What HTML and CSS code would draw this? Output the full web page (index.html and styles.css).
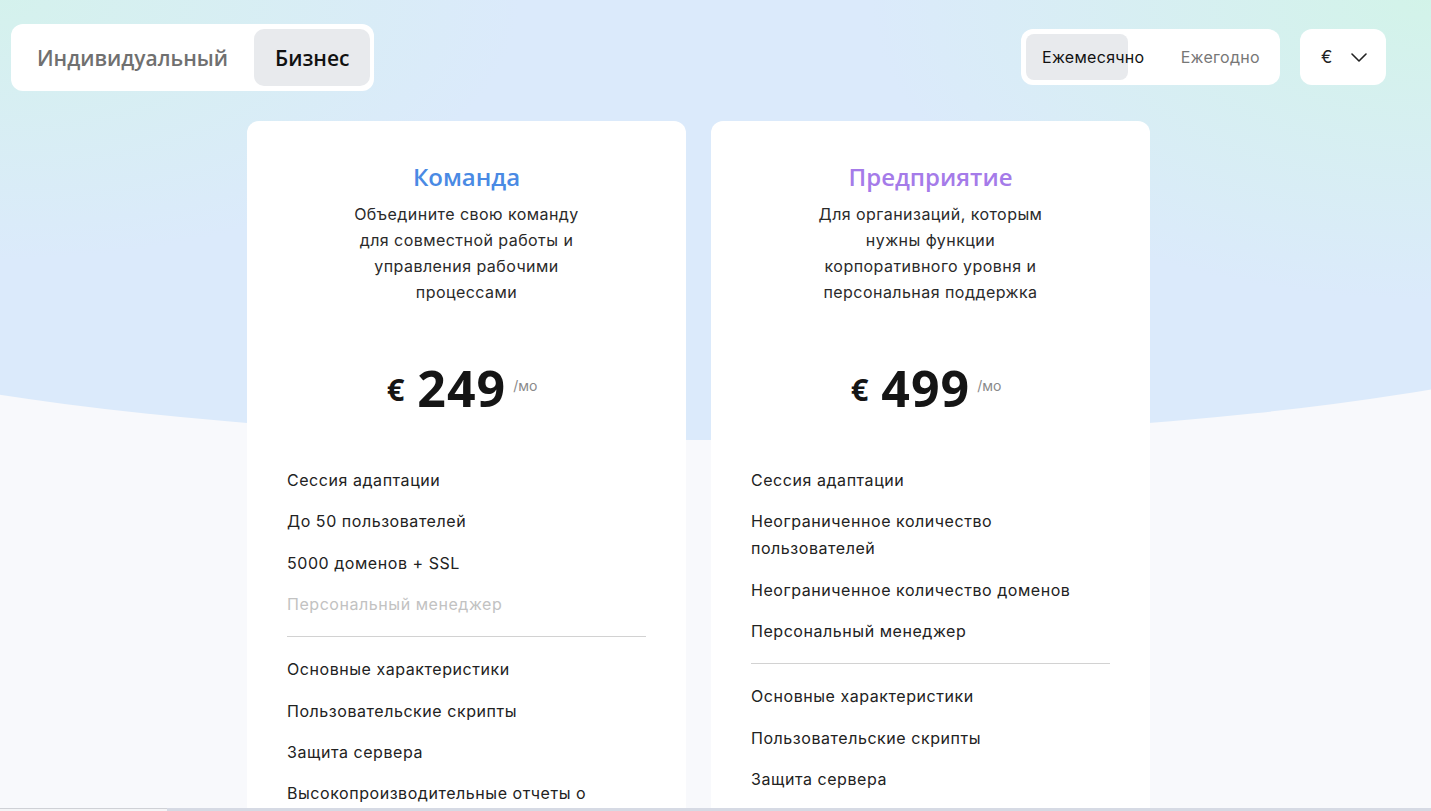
FILE: index.html
```html
<!DOCTYPE html>
<html lang="ru">
<head>
<meta charset="utf-8">
<title>Тарифы</title>
<link rel="stylesheet" href="styles.css">
</head>
<body>
<div class="page">
  <div class="bg-top"></div>
  <header class="topbar">
    <div class="seg">
      <button class="seg-item">Индивидуальный</button>
      <button class="seg-item seg-active">Бизнес</button>
    </div>
    <div class="right-controls">
      <div class="billing">
        <span class="bill-item bill-active">Ежемесячно</span>
        <span class="bill-item bill-other">Ежегодно</span>
      </div>
      <div class="currency">
        <span class="cur-sign">€</span>
        <svg class="chev" width="16" height="9" viewBox="0 0 16 9"><path d="M1 1 L8 8 L15 1" fill="none" stroke="#222" stroke-width="1.6" stroke-linecap="round" stroke-linejoin="round"/></svg>
      </div>
    </div>
  </header>

  <main class="cards">
    <section class="card">
      <h2 class="title title-team">Команда</h2>
      <p class="desc">Объедините свою команду<br>для совместной работы и<br>управления рабочими<br>процессами</p>
      <div class="price"><span class="cur">€</span><span class="amount">249</span><span class="per">/мо</span></div>
      <ul class="features">
        <li>Сессия адаптации</li>
        <li>До 50 пользователей</li>
        <li>5000 доменов + SSL</li>
        <li class="dim">Персональный менеджер</li>
      </ul>
      <hr class="divider">
      <ul class="features">
        <li>Основные характеристики</li>
        <li>Пользовательские скрипты</li>
        <li>Защита сервера</li>
        <li>Высокопроизводительные отчеты о</li>
      </ul>
    </section>
    <section class="card">
      <h2 class="title title-ent">Предприятие</h2>
      <p class="desc">Для организаций, которым<br>нужны функции<br>корпоративного уровня и<br>персональная поддержка</p>
      <div class="price"><span class="cur">€</span><span class="amount">499</span><span class="per">/мо</span></div>
      <ul class="features">
        <li>Сессия адаптации</li>
        <li>Неограниченное количество пользователей</li>
        <li>Неограниченное количество доменов</li>
        <li>Персональный менеджер</li>
      </ul>
      <hr class="divider">
      <ul class="features">
        <li>Основные характеристики</li>
        <li>Пользовательские скрипты</li>
        <li>Защита сервера</li>
      </ul>
    </section>
  </main>
  <div class="bottom-bar"><div class="bar-left"></div><div class="bar-right"></div></div>
</div>
</body>
</html>
```

FILE: styles.css
```css
* { box-sizing: border-box; }
html, body { margin: 0; padding: 0; }
body {
  background: #f8f9fc;
  font-family: Inter, "Noto Sans", sans-serif;
  color: #222;
  overflow: hidden;
  height: 811px;
}
.page {
  position: relative;
  width: 1431px;
  height: 811px;
  overflow: hidden;
}
.bg-top {
  position: absolute;
  left: -301.5px;
  top: -400px;
  width: 2000px;
  height: 840px;
  border-radius: 0 0 1000px 1000px / 0 0 158.5px 158.5px;
  background:
    radial-gradient(ellipse 520px 260px at 301px 400px, rgba(212, 242, 236, 0.95), rgba(212, 242, 236, 0) 100%),
    radial-gradient(ellipse 560px 300px at 1732px 400px, rgba(210, 244, 232, 0.95), rgba(210, 244, 232, 0) 100%),
    #dbeafb;
  z-index: 0;
}
.topbar {
  position: relative;
  z-index: 1;
  display: flex;
  justify-content: space-between;
  align-items: flex-start;
  padding: 24px 45px 0 11px;
}
.seg {
  display: flex;
  align-items: stretch;
  background: #fff;
  border-radius: 12px;
  padding: 5px 4px 5px 0;
  height: 67px;
}
.seg-item {
  border: 0;
  background: transparent;
  font-family: "Open Sans", "Noto Sans", sans-serif;
  font-weight: 600;
  font-size: 21px;
  color: #707070;
  padding: 0 26px;
  border-radius: 10px;
  cursor: pointer;
}
.seg-active {
  background: #e8eaed;
  color: #111;
  padding: 0 21px;
}
.right-controls {
  display: flex;
  gap: 20px;
  margin-top: 5px;
}
.billing {
  display: flex;
  align-items: stretch;
  width: 259px;
  height: 56px;
  background: #fff;
  border-radius: 12px;
  padding: 5px;
  font-size: 16px;
  letter-spacing: 0.3px;
}
.bill-item {
  display: flex;
  align-items: center;
  white-space: nowrap;
}
.bill-active {
  width: 102px;
  flex: none;
  background: #e8eaed;
  border-radius: 8px;
  padding-left: 16px;
  color: #111;
}
.bill-other {
  margin-left: auto;
  padding-right: 15px;
  color: #777;
}
.currency {
  width: 86px;
  height: 56px;
  background: #fff;
  border-radius: 12px;
  display: flex;
  align-items: center;
  padding-left: 21px;
  gap: 19px;
  font-size: 17px;
  color: #222;
}
.chev { display: block; }

.cards {
  position: relative;
  z-index: 1;
  display: flex;
  gap: 25px;
  padding-left: 247px;
  margin-top: 30px;
}
.card {
  width: 439px;
  height: 760px;
  flex: none;
  background: #fff;
  border-radius: 12px;
  padding: 40px 40px 0;
}
.title {
  margin: 0;
  text-align: center;
  font-family: "Open Sans", "Noto Sans", sans-serif;
  font-weight: 600;
  font-size: 24px;
  line-height: 32px;
}
.title-team { color: #4a8ae4; }
.title-ent { color: #a57be9; }
.desc {
  margin: 8px 0 0;
  text-align: center;
  font-size: 16px;
  line-height: 26px;
  letter-spacing: 0.45px;
  color: #2a2a2a;
}
.price {
  margin-top: 53px;
  height: 60px;
  display: flex;
  justify-content: center;
  align-items: center;
  padding-right: 9px;
  font-family: "Open Sans", "Noto Sans", sans-serif;
  font-weight: 700;
  color: #151515;
}
.cur { font-size: 31px; line-height: 60px; margin-right: 13px; margin-top: 1px; }
.amount { font-size: 50px; line-height: 60px; letter-spacing: 1px; }
.per {
  font-family: Inter, "Noto Sans", sans-serif;
  font-weight: 400;
  font-size: 14px;
  color: #8a8a8a;
  margin-left: 7px;
  align-self: flex-start;
  line-height: 56px;
}
.features {
  list-style: none;
  margin: 49px 0 0;
  padding: 0;
  display: flex;
  flex-direction: column;
  gap: 14.4px;
  font-size: 16px;
  line-height: 27px;
  letter-spacing: 0.55px;
}
.divider + .features { margin-top: 0; }
.dim { color: #c2c2c2; }
.divider {
  border: 0;
  border-top: 1px solid #d2d2d2;
  margin: 18px 0 19px;
}
.bottom-bar {
  position: absolute;
  left: 0;
  right: 0;
  bottom: 0;
  height: 3px;
  display: flex;
  z-index: 2;
}
.bar-left { width: 167px; background: #f4f5f7; border-top: 1px solid #cfd1d6; }
.bar-right { flex: 1; background: #d6dae4; }
```
